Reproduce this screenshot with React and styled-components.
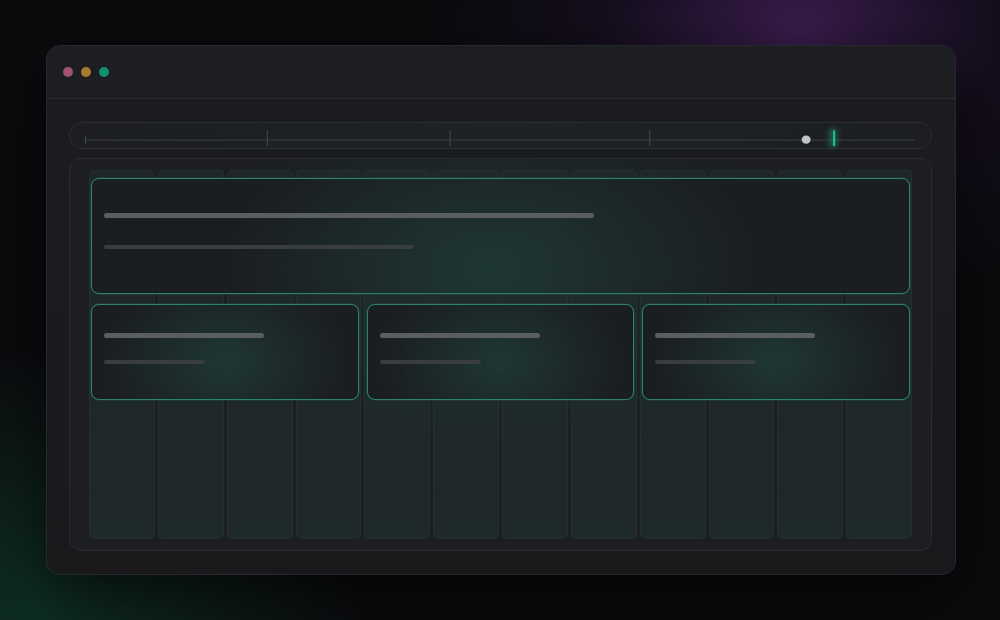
import React from "react";
import styled, { createGlobalStyle } from "styled-components";

const Global = createGlobalStyle`
  html, body { margin: 0; padding: 0; }
  body {
    width: 1000px;
    height: 620px;
    overflow: hidden;
    font-family: Inter, "Liberation Sans", sans-serif;
    background:
      radial-gradient(ellipse 360px 280px at 800px 30px, rgba(72, 34, 96, 0.75), rgba(40, 20, 60, 0.3) 55%, transparent 100%),
      radial-gradient(ellipse 320px 260px at 40px 610px, rgba(16, 70, 48, 0.6), transparent 100%),
      #0b0b0e;
  }
`;

const Page = styled.div`
  box-sizing: border-box;
  width: 1000px;
  height: 620px;
  padding: 45px 44px 45px 46px;
`;

const Window = styled.div`
  box-sizing: border-box;
  height: 100%;
  display: flex;
  flex-direction: column;
  border-radius: 14px;
  border: 1px solid #27282c;
  background: linear-gradient(180deg, #1c1d20 0%, #19191c 100%);
  box-shadow: 0 20px 60px rgba(0, 0, 0, 0.6);
  overflow: hidden;
`;

const TitleBar = styled.div`
  height: 52px;
  flex: none;
  display: flex;
  align-items: center;
  gap: 8px;
  padding-left: 16px;
  border-bottom: 1px solid #2c2d31;
  background: #1d1e21;
`;

const Dot = styled.span`
  width: 10px;
  height: 10px;
  border-radius: 50%;
  background: ${(p) => p.$c};
`;

const Body = styled.div`
  flex: 1;
  display: flex;
  flex-direction: column;
  gap: 9px;
  padding: 23px 23px 23px 22px;
`;

const Timeline = styled.div`
  box-sizing: border-box;
  height: 27px;
  flex: none;
  border-radius: 13px;
  border: 1px solid #2b2d30;
  background: linear-gradient(90deg, #1c1e21, #1f2224 50%, #1c1e21);
`;

const Ruler = styled.svg`
  display: block;
  width: 100%;
  height: 100%;
  overflow: visible;
`;

const Panel = styled.div`
  box-sizing: border-box;
  flex: 1;
  border-radius: 12px;
  border: 1px solid #2a2c30;
  background:
    radial-gradient(ellipse 280px 200px at 420px 110px, rgba(35, 110, 85, 0.22), transparent 100%),
    #1c1e21;
  padding: 11px 19px 11px 19px;
  display: grid;
`;

const Columns = styled.div`
  grid-area: 1 / 1;
  display: grid;
  grid-template-columns: repeat(12, 1fr);
  gap: 3px;
`;

const Column = styled.div`
  border-radius: 5px;
  border: 1px solid rgba(60, 80, 78, 0.18);
  background: linear-gradient(180deg, rgba(34, 44, 44, 0.6), rgba(32, 44, 44, 0.8));
`;

const Cards = styled.div`
  grid-area: 1 / 1;
  align-self: start;
  display: grid;
  grid-template-columns: repeat(3, 1fr);
  column-gap: 8px;
  row-gap: 10px;
  padding: 8px 2px 0 2px;
`;

const Card = styled.div`
  box-sizing: border-box;
  grid-column: ${(p) => (p.$wide ? "1 / -1" : "auto")};
  height: ${(p) => (p.$wide ? "116px" : "96px")};
  border-radius: 8px;
  border: 1px solid #2b8465;
  box-shadow: 0 0 0 0.5px rgba(43, 132, 101, 0.35);
  background:
    radial-gradient(ellipse ${(p) => (p.$wide ? "260px 160px at 400px 90px" : "120px 90px at 50% 60%")}, rgba(36, 96, 78, 0.38), transparent 100%),
    #1b1e21;
  padding: ${(p) => (p.$wide ? "34px 12px" : "28px 12px")};
  display: flex;
  flex-direction: column;
  gap: ${(p) => (p.$wide ? "27px" : "22px")};
`;

const Bar = styled.div`
  width: ${(p) => p.$w}px;
  height: ${(p) => (p.$strong ? 5 : 4)}px;
  border-radius: 3px;
  background: ${(p) => (p.$strong ? "#5b5e61" : "#3a3d40")};
`;

const cards = [
  { wide: true, a: 490, b: 310 },
  { a: 160, b: 101 },
  { a: 160, b: 101 },
  { a: 160, b: 101 },
];

export default function App() {
  return (
    <Page>
      <Global />
      <Window>
        <TitleBar>
          <Dot $c="#9f5274" />
          <Dot $c="#a87a30" />
          <Dot $c="#0e9071" />
        </TitleBar>
        <Body>
          <Timeline>
            <Ruler viewBox="0 0 862 27" preserveAspectRatio="none">
              <defs>
                <filter id="glow" x="-300%" y="-50%" width="700%" height="200%">
                  <feGaussianBlur stdDeviation="3" />
                </filter>
              </defs>
              <line x1="15" y1="18.5" x2="846" y2="18.5" stroke="#3d3f43" strokeWidth="1" />
              <line x1="15.5" y1="14" x2="15.5" y2="22" stroke="#4a4c50" strokeWidth="1" />
              <line x1="197.5" y1="8" x2="197.5" y2="25" stroke="#4a4c50" strokeWidth="1" />
              <line x1="380.5" y1="8" x2="380.5" y2="25" stroke="#4a4c50" strokeWidth="1" />
              <line x1="580.5" y1="8" x2="580.5" y2="25" stroke="#4a4c50" strokeWidth="1" />
              <circle cx="737" cy="18" r="4.5" fill="#c2c3c5" />
              <rect x="761" y="6" width="6" height="20" fill="#1fb885" opacity="0.55" filter="url(#glow)" />
              <rect x="764" y="8" width="2" height="17" fill="#22c08c" />
            </Ruler>
          </Timeline>
          <Panel>
            <Columns>
              {Array.from({ length: 12 }, (_, i) => (
                <Column key={i} />
              ))}
            </Columns>
            <Cards>
              {cards.map((c, i) => (
                <Card key={i} $wide={c.wide}>
                  <Bar $strong $w={c.a} />
                  <Bar $w={c.b} />
                </Card>
              ))}
            </Cards>
          </Panel>
        </Body>
      </Window>
    </Page>
  );
}
